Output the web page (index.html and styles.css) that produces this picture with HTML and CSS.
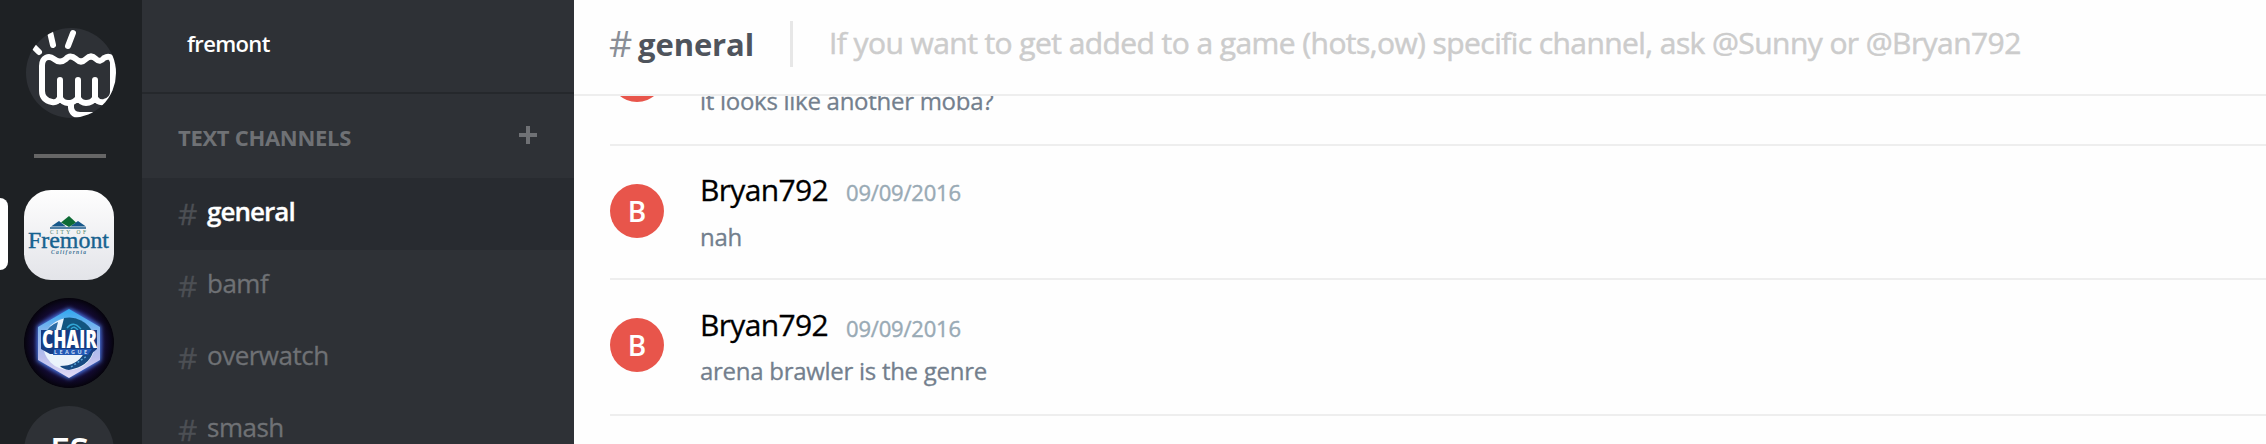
FILE: index.html
```html
<!DOCTYPE html>
<html lang="en">
<head>
<meta charset="utf-8">
<title>fremont - #general</title>
<link rel="stylesheet" href="styles.css">
</head>
<body>
<div class="app">
  <nav class="rail">
    <div class="guild guild-home">
      <svg viewBox="0 0 90 90" width="90" height="90" fill="none" stroke="#fff" stroke-linecap="round" stroke-linejoin="round">
        <g stroke-width="6">
          <path d="M8 19L13 24M24 4L27 17M47 5L42 18"/>
          <path d="M16 38C16 29 23 27 28 31Q34 36 40 31Q44 26 50 31Q55 36 60 31Q65 26 70 31Q74 35 78 30Q85 26 87 34V62Q88 72 78 74Q72 75 69 70Q66 75 60 75Q55 75 52 70Q48 75 42 75Q37 75 34 70Q31 75 26 74Q16 72 16 63Z"/>
          <path d="M34 52V70M52 52V70M69 52V70M45 76Q44 87 54 87H74"/>
        </g>
      </svg>
    </div>
    <div class="rail-line"></div>
    <div class="guild guild-fremont">
      <svg viewBox="0 0 90 90" width="90" height="90">
        <path d="M27 36.500L35 31L42 36.500ZM46 36.500L54 31L62 36.500Z" fill="#17588a"/>
        <path d="M37 32.500L45 26L52 32.500L45 37Z" fill="#0d6b35"/>
        <path d="M26 38H62" stroke="#17588a" stroke-width="1.500"/>
        <text class="serif" x="26" y="43.500" font-size="5.500" textLength="36" fill="#4d8064">CITY OF</text>
        <text class="serif" x="4" y="58" font-size="24" textLength="81" lengthAdjust="spacingAndGlyphs" fill="#17628f" stroke="#17628f" stroke-width=".4">Fremont</text>
        <text class="serif" x="27" y="64" font-size="5.500" font-style="italic" font-weight="bold" textLength="35" fill="#3a7193">California</text>
      </svg>
    </div>
    <div class="guild guild-chair">
      <svg viewBox="0 0 90 90" width="90" height="90">
        <defs>
          <radialGradient id="glow"><stop offset=".6" stop-color="#2c2c8c"/><stop offset=".8" stop-color="#120a30"/><stop offset="1" stop-color="#05030b"/></radialGradient>
          <linearGradient id="hex" x1="0" y1="0" x2="0" y2="1"><stop offset="0" stop-color="#2ea8f0"/><stop offset=".35" stop-color="#8fb8ee"/><stop offset=".7" stop-color="#b9bdec"/><stop offset="1" stop-color="#e4dcf6"/></linearGradient>
          <filter id="soft" x="-20%" y="-20%" width="140%" height="140%"><feGaussianBlur stdDeviation="2"/></filter>
        </defs>
        <rect width="90" height="90" fill="#07040f"/>
        <circle cx="45" cy="45" r="45" fill="url(#glow)"/>
        <path d="M45 10L77 28V63L45 81L13 63V28Z" fill="#4a7ce0" filter="url(#soft)"/>
        <path d="M45 11L76 29V62L45 80L14 62V29Z" fill="url(#hex)"/>
        <circle cx="45" cy="46" r="26" fill="#eaf3fb"/>
        <path d="M40 20A26 26 0 0 1 69 35L36 36Z" fill="#12557f"/>
        <path d="M34 24Q24 28 21 36H31Z" fill="#2b6ba5"/>
        <path d="M43 30Q49 22 57 31M47 31Q50 27 54 32" fill="none" stroke="#32a7d5" stroke-width="1.300"/>
        <path d="M69 54Q65 68 45 72Q39 71 36 68Q53 68 60 55Z" fill="#174a82"/>
        <path d="M47 69L63 58" stroke="#57a6d8" stroke-width="1.500" stroke-dasharray="2 2"/>
        <path d="M17 32H73V51L67 56H26L17 51Z" fill="#153c83"/>
        <path d="M30 51H68L64 57H29Z" fill="#2259b4"/>
        <text class="sans" x="18" y="50" font-size="24" font-weight="800" textLength="55" lengthAdjust="spacingAndGlyphs" fill="#fff">CHAIR</text>
        <text class="sans" x="30" y="56" font-size="5.500" font-weight="700" textLength="33" fill="#c5daf4">LEAGUE</text>
      </svg>
    </div>
    <div class="guild guild-es">ES</div>
    <div class="pill"></div>
  </nav>

  <aside class="sidebar">
    <header class="guild-name"><span>fremont</span></header>
    <div class="section">
      <span class="section-title">TEXT CHANNELS</span>
      <svg class="plus" viewBox="0 0 18 18" width="18" height="18"><path d="M9 0V18M0 9H18" stroke="#6f7175" stroke-width="4"/></svg>
    </div>
    <div class="channel active"><span class="hash">#</span><span class="label">general</span></div>
    <div class="channel"><span class="hash">#</span><span class="label">bamf</span></div>
    <div class="channel"><span class="hash">#</span><span class="label">overwatch</span></div>
    <div class="channel"><span class="hash">#</span><span class="label">smash</span></div>
  </aside>

  <main class="chat">
    <header class="topbar">
      <span class="top-hash">#</span><span class="top-name">general</span>
      <span class="divider"></span>
      <span class="topic">If you want to get added to a game (hots,ow) specific channel, ask @Sunny or @Bryan792</span>
    </header>
    <div class="messages">
      <article class="message clipped">
        <div class="avatar">B</div>
        <div class="body"><p class="text">it looks like another moba?</p></div>
      </article>
      <article class="message">
        <div class="avatar">B</div>
        <div class="body"><div class="meta"><span class="author">Bryan792</span><span class="date">09/09/2016</span></div><p class="text">nah</p></div>
      </article>
      <article class="message last">
        <div class="avatar">B</div>
        <div class="body"><div class="meta"><span class="author">Bryan792</span><span class="date">09/09/2016</span></div><p class="text">arena brawler is the genre</p></div>
      </article>
    </div>
  </main>
</div>
</body>
</html>
```
FILE: styles.css
```css
* { box-sizing: border-box; }
body { margin: 0; overflow: hidden; font-family: "Open Sans", "Noto Sans", sans-serif; }
.app { display: flex; width: 2266px; height: 444px; overflow: hidden; background: #fefefe; }
.serif { font-family: "Liberation Serif", serif; }
.sans { font-family: "Open Sans", sans-serif; }

.rail { position: relative; flex: none; width: 142px; padding: 28px 0 0 24px; background: #1e2124; }
.guild { width: 90px; height: 90px; border-radius: 50%; overflow: hidden; background: #2e3136; }
.guild svg { display: block; }
.guild-home { margin-left: 2px; }
.rail-line { width: 72px; height: 4px; margin: 36px 0 32px 10px; background: #666; }
.guild-fremont { border-radius: 27px; background: linear-gradient(#fefefe, #e3e4e9); }
.guild-chair { margin: 18px 0; }
.guild-es { color: #fff; font-size: 36px; font-weight: 600; letter-spacing: -1px; line-height: 90px; text-align: center; }
.pill { position: absolute; left: 0; top: 198px; width: 8px; height: 72px; background: #fff; border-radius: 0 8px 8px 0; }

.sidebar { flex: none; width: 432px; background: #2e3136; }
.guild-name { height: 94px; padding-left: 45px; border-bottom: 2px solid #25282c; color: #fff; font-size: 22px; font-weight: 600; letter-spacing: -.65px; line-height: 87px; }
.section { display: flex; justify-content: space-between; height: 84px; padding: 32px 37px 0 36px; }
.section-title { color: #6f7175; font-size: 22px; font-weight: 700; letter-spacing: -.3px; line-height: 23px; }
.channel { display: flex; height: 72px; padding-left: 36px; color: #6f7175; font-size: 26px; letter-spacing: -.5px; line-height: 67px; -webkit-text-stroke: .3px; }
.hash { width: 29px; color: #4c4f54; font-size: 30px; line-height: 72px; }
.active { background: #282b30; color: #fff; }
.active .label { font-weight: 600; letter-spacing: -.95px; }

.chat { flex: 1; min-width: 0; }
.topbar { display: flex; height: 96px; padding-left: 35px; border-bottom: 2px solid #eee; white-space: nowrap; }
.top-hash { width: 29px; color: #8a8e96; font-size: 36px; line-height: 88px; }
.top-name { width: 152px; color: #4f545c; font-size: 31px; font-weight: 700; letter-spacing: -.1px; line-height: 88px; }
.divider { width: 3px; height: 46px; margin-top: 21px; background: #e7e7e7; }
.topic { margin-left: 36px; color: #ccc; font-size: 30px; letter-spacing: -.57px; line-height: 85px; -webkit-text-stroke: .5px; }
.messages { height: 348px; padding-left: 36px; overflow: hidden; }
.message { display: flex; height: 134px; padding-top: 38px; border-bottom: 2px solid #eee; }
.clipped { height: 136px; margin-top: -86px; }
.clipped .text { padding-top: 40px; }
.last { height: 136px; }
.avatar { width: 54px; height: 54px; border-radius: 50%; background: #e8554b; color: #fff; font-size: 28px; font-weight: 600; line-height: 54px; text-align: center; }
.body { margin: -13px 0 0 36px; }
.meta { display: flex; height: 40px; }
.author { width: 146px; color: #000; font-size: 30px; letter-spacing: -.65px; line-height: 38px; -webkit-text-stroke: .3px; }
.date { color: #99aab5; font-size: 22px; letter-spacing: -.2px; line-height: 43px; -webkit-text-stroke: .4px; }
.text { margin: 0; color: #737f8d; font-size: 24px; letter-spacing: -.28px; line-height: 51px; -webkit-text-stroke: .3px; }
.last .author { line-height: 40px; }
.last .date { line-height: 46px; }
```
